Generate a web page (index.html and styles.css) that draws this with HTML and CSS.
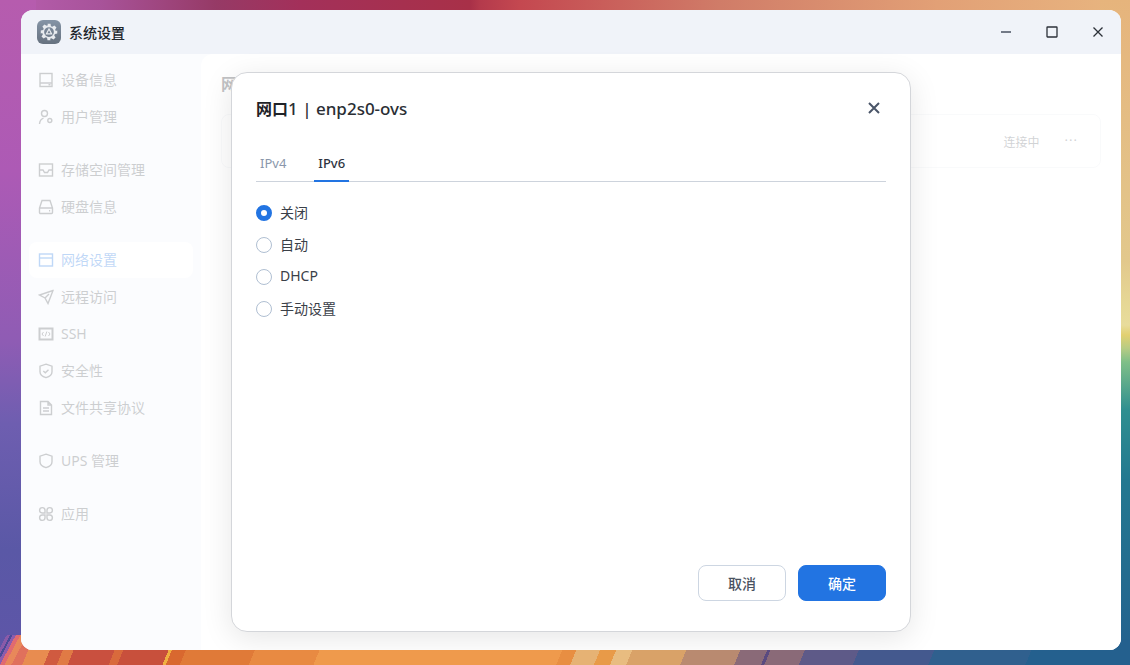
FILE: index.html
```html
<!DOCTYPE html>
<html lang="zh-CN">
<head>
  <meta charset="UTF-8">
  <title>系统设置</title>
  <link rel="stylesheet" href="styles.css">
</head>
<body>
  <div class="window">
    <header class="titlebar">
      <span class="app-icon">
        <svg width="18" height="18" viewBox="0 0 24 24"><path fill="#e8ebef" fill-rule="evenodd" d="M10 1h4l.6 3.2 1.9.8 2.7-1.8 2.8 2.8-1.8 2.7.8 1.9L23 10v4l-3.2.6-.8 1.9 1.8 2.7-2.8 2.8-2.7-1.8-1.900.8L14 23h-4l-.6-3.2-1.900-.8-2.700 1.800-2.800-2.800 1.800-2.700-.8-1.900L1 14v-4l3.200-.6.8-1.900-1.800-2.700 2.800-2.800 2.700 1.800 1.900-.8zM12 5.500a6.500 6.500 0 1 0 0 13 6.500 6.500 0 0 0 0-13z"/><path fill="none" stroke="#e8ebef" stroke-width="1.600" d="M12 8l3.500 6.500h-7z"/></svg>
      </span>
      <span class="app-name">系统设置</span>
      <div class="win-controls">
        <svg width="12" height="12" viewBox="0 0 12 12"><path d="M1 6h10" stroke="#4a5260" stroke-width="1.400"/></svg>
        <svg width="12" height="12" viewBox="0 0 12 12"><rect x="1" y="1" width="10" height="10" rx="0.500" fill="none" stroke="#2b3038" stroke-width="1.300"/></svg>
        <svg width="12" height="12" viewBox="0 0 12 12"><path d="M1.500 1.500l9 9M10.500 1.500l-9 9" stroke="#2b3038" stroke-width="1.300"/></svg>
      </div>
    </header>

    <div class="window-body">
      <nav class="sidebar">
        <div class="nav-group">
          <a class="nav-item">
            <svg class="nav-icon" viewBox="0 0 16 16"><rect x="2" y="1.500" width="12" height="13"/><path d="M2 11h12M10.500 12.800h2"/></svg>
            设备信息
          </a>
          <a class="nav-item">
            <svg class="nav-icon" viewBox="0 0 16 16"><circle cx="6.500" cy="4.500" r="3"/><path d="M1.500 15c.3-3 1.600-5 4-5.800"/><circle cx="11.800" cy="11.500" r="2"/></svg>
            用户管理
          </a>
        </div>
        <div class="nav-group">
          <a class="nav-item">
            <svg class="nav-icon" viewBox="0 0 16 16"><rect x="1.500" y="2" width="13" height="12"/><path d="M1.500 8h3.500l1.500 2.500h3L11 8h3.500"/></svg>
            存储空间管理
          </a>
          <a class="nav-item">
            <svg class="nav-icon" viewBox="0 0 16 16"><path d="M4 1.500h8l2.500 7.500v4.500a1 1 0 0 1-1 1h-11a1 1 0 0 1-1-1V9zM1.500 9h13M11 11.800h1.200"/></svg>
            硬盘信息
          </a>
        </div>
        <div class="nav-group">
          <a class="nav-item active">
            <svg class="nav-icon" viewBox="0 0 16 16"><rect x="1.500" y="2" width="13" height="12"/><path d="M1.500 6h13"/></svg>
            网络设置
          </a>
          <a class="nav-item">
            <svg class="nav-icon" viewBox="0 0 16 16"><path d="M15 1.500L1.500 6l5.500 3 3 5.500zM7 9l4-4"/></svg>
            远程访问
          </a>
          <a class="nav-item">
            <svg class="nav-icon ssh" viewBox="0 0 16 16"><rect x="1.500" y="2.500" width="13" height="11"/><path d="M5.500 6L4 8l1.500 2M10.500 6L12 8l-1.500 2M8.800 5.500l-1.600 5" stroke-width="1"/></svg>
            SSH
          </a>
          <a class="nav-item">
            <svg class="nav-icon" viewBox="0 0 16 16"><path d="M8 1.200l6 2v5.500c0 3-2.700 5-6 6-3.300-1-6-3-6-6V3.200zM5.300 8l2 1.800 3.200-3"/></svg>
            安全性
          </a>
          <a class="nav-item">
            <svg class="nav-icon" viewBox="0 0 16 16"><path d="M2.500 1.500h7.500l3.500 3.500v9.500h-11zM10 1.500V5h3.500M5 8h6M5 11h6"/></svg>
            文件共享协议
          </a>
        </div>
        <div class="nav-group">
          <a class="nav-item">
            <svg class="nav-icon" viewBox="0 0 16 16"><path d="M8 1.200l6 2v5.500c0 3-2.700 5-6 6-3.300-1-6-3-6-6V3.200z"/></svg>
            UPS 管理
          </a>
        </div>
        <div class="nav-group">
          <a class="nav-item">
            <svg class="nav-icon" viewBox="0 0 16 16"><path d="M7 7H4.200A2.700 2.700 0 1 1 7 4.200zM9 7h2.800A2.700 2.700 0 1 0 9 4.200zM7 9H4.200A2.700 2.700 0 1 0 7 11.800zM9 9h2.800A2.700 2.700 0 1 1 9 11.800z"/></svg>
            应用
          </a>
        </div>
      </nav>

      <main class="content">
        <h2 class="page-title">网络设置</h2>
        <div class="net-card">
          <span class="net-status">连接中</span>
          <span class="net-more">···</span>
        </div>
      </main>

      <div class="overlay">
        <section class="dialog">
          <div class="dialog-head">
            <h3 class="dialog-title"><b>网口</b>1 | enp2s0-ovs</h3>
            <svg width="14" height="14" viewBox="0 0 14 14"><path d="M2 2l10 10M12 2L2 12" stroke="#4a5568" stroke-width="2"/></svg>
          </div>
          <div class="tabs">
            <span class="tab">IPv4</span>
            <span class="tab current">IPv6</span>
          </div>
          <div class="radio-list">
            <label class="radio-row"><span class="radio checked"></span>关闭</label>
            <label class="radio-row"><span class="radio"></span>自动</label>
            <label class="radio-row"><span class="radio"></span>DHCP</label>
            <label class="radio-row"><span class="radio"></span>手动设置</label>
          </div>
          <div class="dialog-foot">
            <button class="btn">取消</button>
            <button class="btn primary">确定</button>
          </div>
        </section>
      </div>
    </div>
  </div>
</body>
</html>
```

FILE: styles.css
```css
* {
  box-sizing: border-box;
}

html, body {
  margin: 0;
  width: 100%;
  height: 100%;
  overflow: hidden;
}

body {
  padding: 10px 9px 15px 21px;
  font-family: "Noto Sans", "Noto Sans CJK SC", sans-serif;
  background:
    /* нижний левый угол, полосы */
    linear-gradient(118deg, #5e55a8 0 6px, #8a5aa8 6px 9px, #4a4a98 9px 11px, #8c5cac 11px 14px, #e06a70 14px 18px, #e8885a 18px 24px, transparent 24px) 0 635px / 30px 30px no-repeat,
    /* нижняя полоса */
    linear-gradient(112deg, #e0705c 0 30px, #e88c50 30px 50px, #d05a40 50px 62px, #e07a45 62px 72px, #c9503f 72px 110px, #d96a3c 110px 118px, #c8503c 118px 160px, #f0b040 160px 163px, #d9682f 163px 176px, #e07a38 176px 240px, #e88a42 240px 300px, #ef9a4c 300px 525px, #e88e42 525px 538px, #e6b274 538px 560px, #e89a48 560px 575px, #e8bc80 575px 590px, #d9a268 590px 640px, #b98a70 640px 690px, #8a6a78 690px 715px, #5a4a80 715px 718px, #8a6a78 718px 750px, #5e5a88 750px 800px, #44598e 800px 870px, #30608e 870px 960px, #24608e 960px) 0 640px / 1130px 25px no-repeat,
    /* правая полоса */
    linear-gradient(180deg, #e6b47c 0, #e4bd84 120px, #e2c88c 260px, #e6d896 305px, #e8dc9c 325px, #e2d070 335px, #b8cc84 348px, #7fbf88 362px, #2f8f90 410px, #227890 480px, #22608e 100%) 1100px 0 / 30px 100% no-repeat,
    /* левая полоса */
    linear-gradient(180deg, #b65cae 0, #ad5ab5 170px, #8f5cb4 340px, #6e5eb0 424px, #5a58a6 550px, #5e55a8 100%) 0 0 / 36px 100% no-repeat,
    /* верхняя полоса */
    linear-gradient(90deg, #b85fb0 0, #a8539a 100px, #963a66 216px, #a3305a 300px, #a83048 470px, #b43a4c 480px, #c44850 520px, #d07c68 720px, #e2a076 937px, #e8b680 100%) 0 0 / 100% 24px no-repeat;
}

.window {
  display: flex;
  flex-direction: column;
  width: 1100px;
  height: 640px;
  border-radius: 12px;
  overflow: hidden;
  background: #fff;
}

.titlebar {
  flex: none;
  display: flex;
  align-items: center;
  height: 44px;
  padding-left: 16px;
  background-color: #f0f3f9;
}

.app-icon {
  display: flex;
  align-items: center;
  justify-content: center;
  width: 24px;
  height: 24px;
  border-radius: 6px;
  background: linear-gradient(180deg, #8594a6, #66717f);
}

.app-name {
  margin-left: 8px;
  font-size: 14px;
  font-weight: 500;
  color: #22262c;
}

.win-controls {
  margin-left: auto;
  display: flex;
  gap: 34px;
  padding-right: 17px;
}

.window-body {
  flex: 1;
  position: relative;
  display: flex;
  min-height: 0;
  background-color: #f0f3f9;
}

.sidebar {
  flex: none;
  width: 180px;
  padding: 8px 8px 0;
  background-color: #f0f3f9;
}

.nav-group {
  margin-bottom: 17px;
  display: flex;
  flex-direction: column;
  gap: 1px;
}

.nav-item {
  display: flex;
  align-items: center;
  gap: 7px;
  height: 36px;
  padding: 0 0 2px 9px;
  border-radius: 8px;
  font-size: 14px;
  color: #4a5058;
}

.nav-item.active {
  background-color: #fff;
  color: #1a73e0;
}

.nav-icon {
  flex: none;
  width: 16px;
  height: 16px;
  margin-top: 2px;
  fill: none;
  stroke: #4a5058;
  stroke-width: 1.400;
}

.nav-icon.ssh rect {
  stroke-width: 2;
}

.nav-item.active .nav-icon {
  stroke: #1a73e0;
}

.content {
  flex: 1;
  padding: 18px 20px;
  border-top-left-radius: 12px;
  background-color: #fff;
}

.page-title {
  margin: 0 0 18px;
  font-size: 16px;
  font-weight: 700;
  line-height: 24px;
  color: #22262c;
}

.net-card {
  display: flex;
  align-items: center;
  justify-content: flex-end;
  height: 54px;
  padding: 2px 22px 0 0;
  border: 1px solid #e8ebf0;
  border-radius: 8px;
  font-size: 12px;
  color: #5a6068;
}

.net-more {
  margin-left: 25px;
  margin-top: -4px;
  font-size: 13px;
  letter-spacing: 1px;
  color: #5a6068;
}

/* поверх всего окна, кроме заголовка */
.overlay {
  position: absolute;
  inset: 0;
  display: flex;
  align-items: center;
  justify-content: center;
  background-color: rgba(255, 255, 255, 0.72);
}

.dialog {
  display: flex;
  flex-direction: column;
  width: 680px;
  height: 560px;
  margin-top: -1px;
  padding: 0 24px 29px;
  border: 1px solid #d4d6da;
  border-radius: 16px;
  background-color: #fff;
  box-shadow: 0 6px 30px rgba(0, 0, 0, 0.1);
}

.dialog-head {
  display: flex;
  align-items: center;
  justify-content: space-between;
  height: 74px;
  padding: 0 5px 4px 0;
}

.dialog-title {
  margin: 0;
  font-size: 17px;
  font-weight: 500;
  color: #2a2e34;
}

.dialog-title b {
  font-size: 16px;
  font-weight: 700;
  color: #1f2328;
}

.tabs {
  display: flex;
  gap: 24px;
  height: 35px;
  border-bottom: 1px solid #cdd3dc;
}

.tab {
  height: 35px;
  padding: 6px 4px 0;
  font-size: 13px;
  line-height: 20px;
  color: #8a97ab;
}

.tab.current {
  border-bottom: 2px solid #2274e2;
  font-weight: 500;
  color: #2c3340;
}

.radio-list {
  flex: 1;
  display: flex;
  flex-direction: column;
  gap: 8px;
  padding-top: 19px;
}

.radio-row {
  display: flex;
  align-items: center;
  gap: 8px;
  height: 24px;
  padding-bottom: 2px;
  font-size: 14px;
  color: #3a4048;
}

.radio {
  width: 16px;
  height: 16px;
  margin-top: 2px;
  border: 1px solid #b0bfd2;
  border-radius: 50%;
}

.radio.checked {
  border: 5px solid #2274e2;
  background-color: #fff;
}

.dialog-foot {
  display: flex;
  justify-content: flex-end;
  gap: 12px;
  margin-bottom: 1px;
}

.btn {
  width: 88px;
  height: 36px;
  border: 1px solid #cdd6e2;
  border-radius: 8px;
  background-color: #fff;
  font-family: inherit;
  font-size: 14px;
  font-weight: 500;
  color: #4a5260;
}

.btn.primary {
  border-color: #2274e2;
  background-color: #2274e2;
  color: #fff;
}
```
